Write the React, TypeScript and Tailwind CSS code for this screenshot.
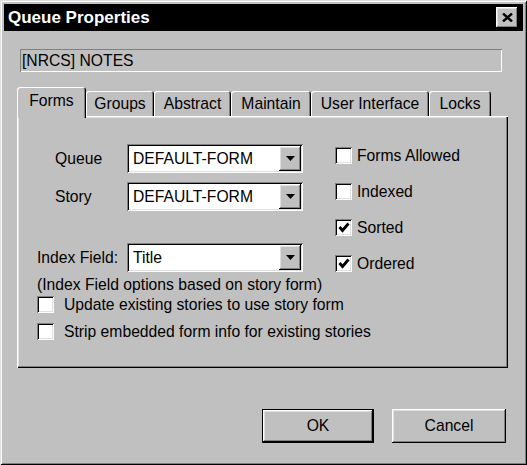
const raised =
  "shadow-[inset_-1px_-1px_#000,inset_1px_1px_#fff,inset_-2px_-2px_#808080,inset_2px_2px_#dfdfdf]";
const sunken =
  "shadow-[inset_1px_1px_#808080,inset_-1px_-1px_#fff,inset_2px_2px_#000,inset_-2px_-2px_#dfdfdf]";

function Arrow() {
  return (
    <svg width="9" height="5" viewBox="0 0 9 5">
      <path d="M0 0h9L4.5 5z" fill="#000" />
    </svg>
  );
}

function Combo({ value, width = 176 }: { value: string; width?: number }) {
  return (
    <div
      className={`flex h-[29px] items-center bg-white p-[2px] ${sunken}`}
      style={{ width }}
    >
      <span className="flex-1 pl-[4px] leading-none text-black">{value}</span>
      <div className={`flex h-[25px] w-[22px] items-center justify-center bg-[#c0c0c0] ${raised}`}>
        <Arrow />
      </div>
    </div>
  );
}

function CheckBox({ checked }: { checked?: boolean }) {
  return (
    <div className={`flex h-[17px] w-[17px] shrink-0 items-center justify-center bg-white ${sunken}`}>
      {checked && (
        <svg width="12" height="11" viewBox="0 0 12 11">
          <path d="M1.5 5 L4.5 8.5 L10.5 1.5" fill="none" stroke="#000" strokeWidth="2.8" />
        </svg>
      )}
    </div>
  );
}

function Tab({ label, width, selected }: { label: string; width: number; selected?: boolean }) {
  if (selected) {
    return (
      <div
        className="relative z-10 -mb-[2px] flex h-[31px] items-center justify-center rounded-t-[3px] bg-[#c0c0c0] pb-[3px] shadow-[inset_1px_1px_#fff,inset_-1px_0_#000,inset_-2px_0_#808080]"
        style={{ width }}
      >
        {label}
      </div>
    );
  }
  return (
    <div
      className="flex h-[25px] items-center justify-center rounded-t-[3px] bg-[#c0c0c0] shadow-[inset_1px_1px_#fff,inset_-1px_0_#000,inset_-2px_0_#808080]"
      style={{ width }}
    >
      {label}
    </div>
  );
}

export default function App() {
  return (
    <div className="h-[465px] w-[527px] bg-[#c0c0c0] font-['Liberation_Sans',Arial,sans-serif] text-[15.7px] text-black">
      <div className="flex h-full flex-col p-[4px] shadow-[inset_1px_1px_#dfdfdf,inset_-1px_-1px_#000,inset_2px_2px_#fff,inset_-2px_-2px_#808080]">
        {/* title bar */}
        <div className="flex h-[27px] items-center justify-between bg-black pl-[4px] pr-[5px]">
          <span className="text-[17px] font-bold text-white">Queue Properties</span>
          <div className={`flex h-[21px] w-[22px] items-center justify-center bg-[#c0c0c0] ${raised}`}>
            <svg width="11" height="9" viewBox="0 0 11 9">
              <path d="M1 0.5 L10 8.5 M10 0.5 L1 8.5" stroke="#000" strokeWidth="2.4" />
            </svg>
          </div>
        </div>

        {/* queue name */}
        <div className="ml-[16px] mt-[18px] flex h-[23px] w-[482px] items-center pl-[2px] shadow-[inset_1px_1px_#808080,inset_-1px_-1px_#fff]">
          [NRCS] NOTES
        </div>

        {/* tabs */}
        <div className="ml-[13px] mt-[15px] flex h-[29px] items-end">
          <Tab label="Forms" width={69} selected />
          <Tab label="Groups" width={68} />
          <Tab label="Abstract" width={77} />
          <Tab label="Maintain" width={80} />
          <Tab label="User Interface" width={118} />
          <Tab label="Locks" width={62} />
        </div>

        {/* panel */}
        <div className="ml-[13px] flex h-[252px] w-[491px] flex-col pl-[20px] pt-[28px] shadow-[inset_1px_1px_#fff,inset_-1px_-1px_#000,inset_-2px_-2px_#808080,inset_2px_2px_#dfdfdf]">
          <div className="flex">
            <div className="flex w-[298px] flex-col">
              <div className="flex items-center">
                <span className="ml-[18px] w-[72px]">Queue</span>
                <Combo value="DEFAULT-FORM" />
              </div>
              <div className="mt-[9px] flex items-center">
                <span className="ml-[18px] w-[72px]">Story</span>
                <Combo value="DEFAULT-FORM" />
              </div>
              <div className="mt-[32px] flex items-center">
                <span className="w-[90px]">Index Field:</span>
                <Combo value="Title" />
              </div>
            </div>
            <div className="mt-[3px] flex flex-col gap-[19px]">
              <label className="flex h-[17px] items-center gap-[5px]">
                <CheckBox />
                <span>Forms Allowed</span>
              </label>
              <label className="flex h-[17px] items-center gap-[5px]">
                <CheckBox />
                <span>Indexed</span>
              </label>
              <label className="flex h-[17px] items-center gap-[5px]">
                <CheckBox checked />
                <span>Sorted</span>
              </label>
              <label className="flex h-[17px] items-center gap-[5px]">
                <CheckBox checked />
                <span>Ordered</span>
              </label>
            </div>
          </div>
          <div className="mt-[4px] h-[17px] leading-[17px]">(Index Field options based on story form)</div>
          <label className="mt-[3px] flex h-[17px] items-center gap-[10px]">
            <CheckBox />
            <span>Update existing stories to use story form</span>
          </label>
          <label className="mt-[10px] flex h-[17px] items-center gap-[10px]">
            <CheckBox />
            <span>Strip embedded form info for existing stories</span>
          </label>
        </div>

        {/* buttons */}
        <div className="mr-[17px] mt-[41px] flex justify-end gap-[18px]">
          <div className="flex h-[34px] w-[112px] items-center justify-center border border-black">
            <div className={`flex h-full w-full items-center justify-center ${raised}`}>OK</div>
          </div>
          <div className={`flex h-[34px] w-[114px] items-center justify-center ${raised}`}>Cancel</div>
        </div>
      </div>
    </div>
  );
}
